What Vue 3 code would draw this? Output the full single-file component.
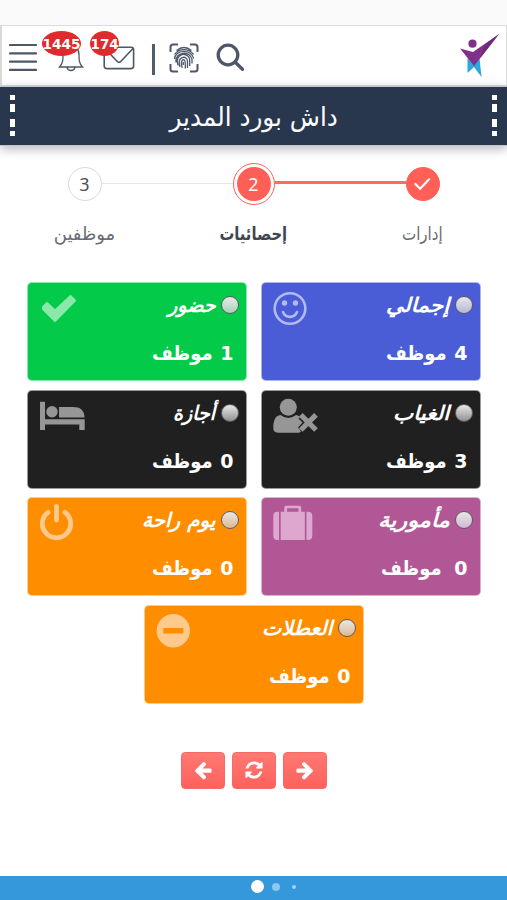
<script setup>
const cards = [
  { title: 'إجمالي', tw: 63, count: 4, icon: 'smile', tone: 'blue' },
  { title: 'حضور', tw: 48, count: 1, icon: 'check', tone: 'green' },
  { title: 'الغياب', tw: 56, count: 3, icon: 'absent', tone: 'black' },
  { title: 'أجازة', tw: 42, count: 0, icon: 'bed', tone: 'black' },
  { title: 'مأمورية', tw: 72, count: 0, icon: 'case', tone: 'purple', wide: true },
  { title: 'يوم راحة', tw: 74, count: 0, icon: 'power', tone: 'orange' },
  { title: 'العطلات', tw: 70, count: 0, icon: 'minus', tone: 'orange', last: true },
]

// Narrows or widens a label to its design width.
const vFit = {
  mounted(el, { value }) {
    el.style.transform = `scaleX(${value / el.offsetWidth})`
  },
}
</script>

<template>
  <div class="screen">
    <div class="status"></div>
    <header class="header">
      <svg class="menu" viewBox="0 0 28 28"><path d="M1 2H27M1 10.3H27M1 18.6H27M1 26.9H27" /></svg>
      <div class="notify bell">
        <svg viewBox="0 0 26 30"><path d="M1.5 24C5 20 5 17 5 12C5 6 8 3 13 3S21 6 21 12C21 17 21 20 24.5 24ZM9 24.5C10 28.5 16 28.5 17 24.5" /></svg>
        <span class="badge wide"><b v-fit="38">1445</b></span>
      </div>
      <div class="notify mail">
        <svg viewBox="0 0 32 24"><rect x="1.2" y="1.2" width="29.4" height="21.4" rx="2.5" /><path d="M2 2.5L14 15.3Q16 17.3 18 15.3L30 2.5" /></svg>
        <span class="badge"><b v-fit="28">174</b></span>
      </div>
      <span class="divider"></span>
      <svg class="finger" viewBox="0 0 30 30">
        <path class="frame" d="M1.5 9V4Q1.5 1.5 4 1.5H9M21 1.5H26Q28.500 1.5 28.500 4V9M28.500 21V26Q28.500 28.500 26 28.500H21M9 28.500H4Q1.500 28.500 1.500 26V21" />
        <path d="M7.500 7.500Q15 1.500 22.500 7.500M5.500 11.500C10 5 20 5 24.500 11.500M5.500 16C6 6.500 22.500 5.500 24.500 15.500M7 19.500C5.500 8 21.500 7.500 23 16.500V20.500M9 22.500C8 19 7.500 15.500 10.500 13C14 9.500 20.500 12 20.700 17V23M11 24C9.500 19 10 15 14 14.300C17 14 18.500 16 18.500 18.500V25M13.300 25C12 21 12 17 14.500 16.700C17 17 16 20 16.400 25.500M14.300 19V22" />
      </svg>
      <svg class="search" viewBox="0 0 30 30"><circle cx="12" cy="12" r="9.8" /><path d="M19 19L26.500 26.300" /></svg>
      <svg class="logo" viewBox="0 0 40 44">
        <path fill="#2ba9dc" d="M7.500 24L14 31L19.500 24L21.500 43L14 33L7.500 39Z" />
        <path fill="#82318b" d="M0 14.500L13 18L39 0L14 32Z" />
        <path fill="#6d2a79" d="M25 11L39 0L20 24.500Z" />
        <circle cx="12.500" cy="9.700" r="4.100" fill="#82318b" />
      </svg>
    </header>

    <div class="titlebar">
      <span class="dots"><i></i><i></i><i></i><i></i></span>
      <h1><span v-fit="168">داش بورد المدير</span></h1>
      <span class="dots"><i></i><i></i><i></i><i></i></span>
    </div>

    <nav class="steps">
      <div class="step">
        <span class="ring done"><svg viewBox="0 0 18 14"><path d="M1.500 7L6.500 12L16 2" /></svg></span>
        <span class="label"><span v-fit="41">إدارات</span></span>
      </div>
      <span class="line active"></span>
      <div class="step">
        <span class="ring current"><span>2</span></span>
        <span class="label strong"><span v-fit="68">إحصائيات</span></span>
      </div>
      <span class="line"></span>
      <div class="step">
        <span class="ring">3</span>
        <span class="label"><span v-fit="62">موظفين</span></span>
      </div>
    </nav>

    <main class="cards">
      <section v-for="c in cards" :key="c.title" class="card" :class="[c.tone, { last: c.last }]">
        <div class="info">
          <div class="name"><span class="orb"></span><em v-fit="c.tw">{{ c.title }}</em></div>
          <div class="count" :class="{ spaced: c.wide }"><b>{{ c.count }}</b><span v-fit="61">موظف</span></div>
        </div>
        <svg class="icon" viewBox="0 0 60 50">
          <path v-if="c.icon === 'check'" d="M16 25L20 21L28 28.500L43.500 14L48 18.500L28 39L16 27Z" stroke="currentColor" stroke-width="2" stroke-linejoin="round" />
          <g v-else-if="c.icon === 'smile'">
            <circle cx="29" cy="26.500" r="15.300" class="stroke" stroke-width="2.600" />
            <circle cx="23.500" cy="21" r="2.700" /><circle cx="34.500" cy="21" r="2.700" />
            <path class="stroke" stroke-width="2.600" stroke-linecap="round" d="M22 30C24.500 36.500 33.500 36.500 36 30" />
          </g>
          <g v-else-if="c.icon === 'bed'">
            <path d="M13 11.700H18V29.300H57.700V40H52.300V34.500H18V40H13Z" />
            <circle cx="25" cy="21.700" r="5.700" />
            <path d="M32 17H46C53 17 57.500 20 57.500 27.500H32Z" />
          </g>
          <g v-else-if="c.icon === 'absent'">
            <circle cx="27.300" cy="17.300" r="8.500" />
            <path d="M19.500 25Q27.300 31 35 25Q38 25.500 39 27L37.500 28.500L41.500 32.500L37 37.500L40 41.500Q39 42.700 37 42.700H17Q12.300 42.500 12.300 38C12.300 31 14 25.500 19.500 25Z" />
            <path class="stroke" stroke-width="5.200" d="M39.800 24.800L55 40M55 24.800L39.800 40" />
          </g>
          <g v-else-if="c.icon === 'power'" class="stroke" stroke-width="4.800" stroke-linecap="round">
            <path d="M21 15.300A14.200 14.200 0 1 0 38 15.300M29.500 9.500V23" />
          </g>
          <g v-else-if="c.icon === 'case'">
            <path d="M18 14.700V43H16.500Q12.300 43 12.300 38.500V19Q12.300 14.700 16.500 14.700ZM45.500 14.700H47Q51.300 14.700 51.300 19V38.500Q51.300 43 47 43H45.500ZM19.700 14.700H23.300V10.500Q23.300 8.700 25 8.700H38.500Q40.200 8.700 40.200 10.500V14.700H43.800V43H19.700ZM26 14.700H37.500V11.300H26Z" fill-rule="evenodd" />
          </g>
          <path v-else fill-rule="evenodd" d="M29.300 9A16.700 16.700 0 1 0 29.300 42.400A16.700 16.700 0 1 0 29.300 9M20 23H38.700Q39.400 23 39.400 23.700V27.900Q39.400 28.600 38.700 28.600H20Q19.300 28.600 19.300 27.900V23.700Q19.300 23 20 23Z" />
        </svg>
      </section>
    </main>

    <div class="actions">
      <button aria-label="السابق"><svg viewBox="0 0 1792 1792"><path d="M1664 896v128q0 53-32.500 90.500t-84.500 37.500h-704l293 294q38 36 38 90t-38 90l-75 76q-37 37-90 37-52 0-91-37l-651-652q-37-37-37-90 0-52 37-91l651-650q38-38 91-38 52 0 90 38l75 74q38 38 38 91t-38 91l-293 293h704q52 0 84.500 37.500t32.500 90.500z" /></svg></button>
      <button aria-label="تحديث"><svg viewBox="0 0 1792 1792"><path d="M1639 1056q0 5-1 7-64 268-268 434.500t-478 166.500q-146 0-282.500-55t-243.500-157l-129 129q-19 19-45 19t-45-19-19-45v-448q0-26 19-45t45-19h448q26 0 45 19t19 45-19 45l-137 137q71 66 161 102t187 36q134 0 250-65t186-179q11-17 53-117 8-23 30-23h192q13 0 22.500 9.500t9.500 22.500zm25-800v448q0 26-19 45t-45 19h-448q-26 0-45-19t-19-45 19-45l138-138q-148-137-349-137-134 0-250 65t-186 179q-11 17-53 117-8 23-30 23h-199q-13 0-22.500-9.500t-9.500-22.500v-7q65-268 270-434.500t480-166.500q146 0 284 55.500t245 156.500l130-129q19-19 45-19t45 19 19 45z" /></svg></button>
      <button aria-label="التالي"><svg viewBox="0 0 1792 1792"><path d="M1664 896v128q0 53-32.500 90.500t-84.500 37.500h-704l293 294q38 36 38 90t-38 90l-75 76q-37 37-90 37-52 0-91-37l-651-652q-37-37-37-90 0-52 37-91l651-650q38-38 91-38 52 0 90 38l75 74q38 38 38 91t-38 91l-293 293h704q52 0 84.500 37.500t32.500 90.500z" /></svg></button>
    </div>

    <footer class="footer"><i></i><i></i><i></i></footer>
  </div>
</template>

<style>
body { background: #fff; overflow: hidden; }
</style>

<style scoped>
* { box-sizing: border-box; }
svg { display: block; flex: none; }
.screen { width: 507px; height: 900px; display: flex; flex-direction: column; background: #fff; font-family: "DejaVu Sans", sans-serif; }
.status { height: 25px; background: #fafafa; flex: none; }
.header { height: 61px; flex: none; display: flex; align-items: flex-start; border: 1px solid #dcdcdc; border-left: 2px solid #dadada; padding: 17px 7px 0; background: #fff; }
.header svg { fill: none; stroke: #4c586a; stroke-width: 1.6; }
.header .menu { width: 28px; height: 28px; stroke-width: 2.200; stroke-linecap: round; }
.notify { position: relative; }
.bell { margin: 0 0 0 21px; }
.bell svg { width: 26px; height: 30px; stroke-width: 1.300; }
.mail { margin: 3px 0 0 19px; }
.mail svg { width: 32px; height: 24px; }
.badge { position: absolute; display: flex; align-items: center; justify-content: center; width: 29px; height: 25px; border-radius: 50%; background: #df2b2e; color: #fff; font-size: 14px; left: -13px; top: -15px; }
.badge.wide { width: 39px; left: -16px; top: -12px; }
.divider { width: 3px; height: 31px; background: #515d6d; margin: 1px 0 0 17px; }
.header .finger { width: 30px; height: 30px; margin-left: 14px; stroke-width: 1.300; }
.header .finger .frame { stroke-width: 2; }
.header .search { width: 30px; height: 30px; margin-left: 17px; stroke-width: 3.300; stroke-linecap: round; }
.header .logo { width: 40px; height: 44px; margin: -9px -1px 0 auto; stroke: none; }

.titlebar { height: 60px; flex: none; background: #28374d; border: 1px solid #c4c8ce; border-width: 1px 0; display: flex; justify-content: space-between; padding: 8px 9px; box-shadow: 0 3px 10px rgba(0, 0, 0, .28); }
.titlebar h1 { margin: -1px 0 0; font-size: 26px; font-weight: 400; color: #fff; line-height: 46px; direction: rtl; width: 168px; display: flex; justify-content: center; white-space: nowrap; }
.dots { display: flex; flex-direction: column; gap: 4px; width: 7px; align-items: center; }
.dots i { width: 5px; height: 5px; background: #fff; }
.dots i:nth-child(2), .dots i:nth-child(3) { height: 8px; }
.dots i:nth-child(2) { margin-bottom: 3px; }

.steps { direction: rtl; display: flex; align-items: flex-start; justify-content: center; padding-top: 17px; height: 136px; flex: none; }
.step { width: 42px; display: flex; flex-direction: column; align-items: center; }
.ring { width: 34px; height: 34px; margin: 4px 0; border-radius: 50%; border: 1px solid #d9dadd; display: flex; align-items: center; justify-content: center; font-family: "Noto Sans", sans-serif; font-size: 18px; color: #4a4d55; flex: none; }
.done { background: #fe6058; border-color: #fe6058; }
.done svg { width: 17px; height: 14px; fill: none; stroke: #fff; stroke-width: 2.300; stroke-linecap: round; }
.current { width: 42px; height: 42px; margin: 0; border: 1.500px solid #fe6058; color: #fff; }
.current span { width: 34px; height: 34px; border-radius: 50%; background: #fe6058; display: flex; align-items: center; justify-content: center; }
.line { width: 131px; height: 1px; margin: 20px 0 0 -4px; background: #e6e6e6; }
.line.active { height: 3px; margin: 18px -4px 0 0; background: #fe6b64; }
.label { font-size: 18px; line-height: 26px; margin-top: 16px; color: #686b74; display: flex; justify-content: center; white-space: nowrap; }
.label.strong { font-weight: 700; color: #41454f; }

.cards { direction: rtl; display: flex; flex-wrap: wrap; justify-content: center; gap: 8.500px 14px; padding: 0 20px; }
.card { width: 220px; height: 99px; border-radius: 5px; border: 1px solid rgba(255, 255, 255, .55); display: flex; justify-content: space-between; color: #fff; }
.blue { background: #4a5dd6; --orb: #b5b7dc; --ic: #b1baf2; }
.green { background: #04ca49; --orb: #a4d5b8; --ic: #8ae8ab; }
.black { background: #202020; --orb: #929292; --ic: #969696; }
.purple { background: #b25796; --orb: #d5b5d2; --ic: #dda7d0; }
.orange { background: #ff8d00; --orb: #dfb98e; --ic: #ffc98b; }
.icon { width: 60px; height: 50px; margin: -1px 0 0 -1px; fill: currentColor; color: var(--ic); }
.icon .stroke { fill: none; stroke: currentColor; }
.info { padding: 8px 7px 0 0; }
.name { display: flex; align-items: center; height: 28px; gap: 5px; }
.orb { width: 18px; height: 18px; border-radius: 50%; border: 1.500px solid #5d5c62; background: linear-gradient(#e8e8e8, var(--orb)); flex: none; }
.name em { font-size: 20px; font-weight: 700; white-space: nowrap; transform-origin: right center; }
.count { display: flex; align-items: center; height: 28px; margin: 20px 5px 0 0; font-size: 20px; font-weight: 700; }
.count b { width: 13px; margin-left: 8px; font-size: 19px; }
.count span { transform-origin: right center; }
.count.spaced b { margin-left: 13px; }

.actions { display: flex; gap: 7px; justify-content: center; margin-top: 48px; }
.actions button { width: 44px; height: 37px; border: 1px solid #f86a65; border-radius: 4px; background: linear-gradient(#ff7973, #ff615c); display: flex; align-items: center; justify-content: center; padding: 0; }
.actions svg { width: 20px; height: 20px; fill: #fff; }
.actions button:last-child svg { transform: scaleX(-1); }
.footer { height: 24px; margin-top: auto; background: #3498db; display: flex; align-items: center; padding: 0 0 3px 251px; flex: none; }
.footer i { width: 13px; height: 13px; border-radius: 50%; background: #fff; }
.footer i:nth-child(2) { width: 8px; height: 8px; margin-left: 8px; background: #8ec8ee; }
.footer i:nth-child(3) { width: 4px; height: 4px; margin-left: 12px; background: #a0d2f2; }
</style>
